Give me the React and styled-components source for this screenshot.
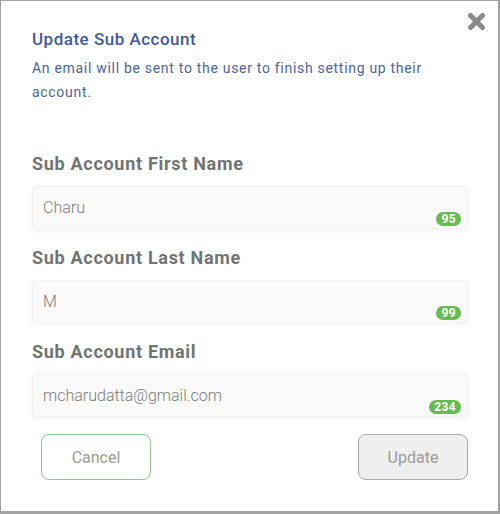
import React from 'react';
import styled, { createGlobalStyle } from 'styled-components';

const Global = createGlobalStyle`
    html, body {
        margin:0;
        padding:0;
        background:#ffffff;
    }
    * {
        box-sizing:border-box;
    }
`

const Modal = styled.div`
    position:relative;
    width:500px;
    height:514px;
    background:#fff;
    border-style:solid;
    border-color:#a2a2a2;
    border-width:1px 2px 3px 1px;
    padding:28px 31px 0 31px;
    font-family:Roboto, "Liberation Sans", sans-serif;
`

const Close = styled.button`
    position:absolute;
    top:11px;
    right:12px;
    width:19px;
    height:19px;
    padding:0;
    border:0;
    background:none;
    cursor:pointer;
    & svg{
        display:block;
    }
`

const Title = styled.h2`
    margin:0;
    font-size:17px;
    line-height:20px;
    font-weight:500;
    letter-spacing:.5px;
    color:#3f5b98;
`

const Intro = styled.p`
    margin:7px 0 0 0;
    font-size:14px;
    line-height:24px;
    letter-spacing:.7px;
    color:#4a64a0;
`

const Fields = styled.div`
    margin-top:49px;
    display:flex;
    flex-direction:column;
    gap:18px;
`

const Field = styled.div`
    display:flex;
    flex-direction:column;
    gap:11px;
`

const Label = styled.label`
    font-size:18px;
    line-height:22px;
    font-weight:700;
    letter-spacing:.7px;
    color:#707473;
`

const InputWrap = styled.div`
    position:relative;
    width:436px;
    height:43px;
`

const Input = styled.input`
    width:100%;
    height:100%;
    padding:0 10px;
    border:1px solid #f1f1f1;
    border-radius:4px;
    background:#fafafa;
    box-shadow:0 2px 6px rgba(0,0,0,.05);
    font-family:Roboto, "Liberation Sans", sans-serif;
    font-size:16px;
    font-weight:300;
    color:#7a7a7a;
    outline:none;
`

const Count = styled.span`
    position:absolute;
    right:7px;
    bottom:3px;
    height:14px;
    padding:0 5px;
    border-radius:7px;
    background:#66bc4f;
    color:#fff;
    font-size:12px;
    line-height:14px;
    font-weight:700;
    letter-spacing:.4px;
`

const Actions = styled.div`
    margin-top:17px;
    padding:0 0 0 9px;
    width:436px;
    display:flex;
    justify-content:space-between;
`

const Button = styled.button`
    width:110px;
    height:46px;
    border-radius:8px;
    border:1px solid ${p => p.primary ? '#a9a9a9' : '#94c495'};
    background:${p => p.primary ? '#efefef' : '#fff'};
    color:#9b9b9b;
    font-family:Roboto, "Liberation Sans", sans-serif;
    font-size:16px;
    cursor:pointer;
`

const fields = [
    { label: 'Sub Account First Name', value: 'Charu', left: 95 },
    { label: 'Sub Account Last Name', value: 'M', left: 99 },
    { label: 'Sub Account Email', value: 'mcharudatta@gmail.com', left: 234 },
]

const App = () => {
    return (
        <>
            <Global />
            <Modal>
                <Close aria-label='close'>
                    <svg width='19' height='19' viewBox='0 0 19 19'>
                        <path d='M3.5 3.5 L15.5 15.5 M15.5 3.5 L3.5 15.5' stroke='#8a8a8a' strokeWidth='5' strokeLinecap='round' />
                    </svg>
                </Close>
                <Title>Update Sub Account</Title>
                <Intro>An email will be sent to the user to finish setting up their account.</Intro>
                <Fields>
                    {fields.map(f => (
                        <Field key={f.label}>
                            <Label>{f.label}</Label>
                            <InputWrap>
                                <Input defaultValue={f.value} />
                                <Count>{f.left}</Count>
                            </InputWrap>
                        </Field>
                    ))}
                </Fields>
                <Actions>
                    <Button>Cancel</Button>
                    <Button primary>Update</Button>
                </Actions>
            </Modal>
        </>
    )
}

export default App
